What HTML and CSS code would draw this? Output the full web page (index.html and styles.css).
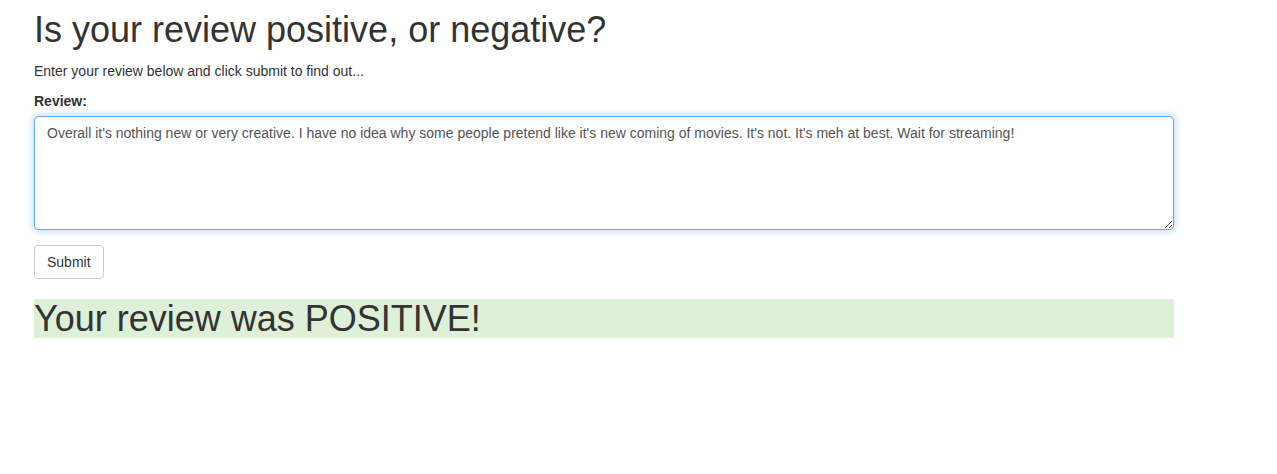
FILE: index.html
```html
<!DOCTYPE html>
<html lang="en">
<head>
<meta charset="utf-8">
<title>Review sentiment</title>
<link rel="stylesheet" href="styles.css">
</head>
<body>
<div class="container">
  <h1 class="title">Is your review positive, or negative?</h1>
  <p class="lead-text">Enter your review below and click submit to find out...</p>
  <form class="review-form">
    <div class="form-group">
      <label class="form-label" for="review">Review:</label>
      <textarea id="review" class="form-control" rows="5">Overall it's nothing new or very creative. I have no idea why some people pretend like it's new coming of movies. It's not. It's meh at best. Wait for streaming!</textarea>
    </div>
    <button type="button" class="btn">Submit</button>
  </form>
  <h1 class="result">Your review was POSITIVE!</h1>
</div>
</body>
</html>
```

FILE: styles.css
```css
html, body {
  margin: 0;
  padding: 0;
  background: #fff;
}
body {
  font-family: "Liberation Sans", Arial, Helvetica, sans-serif;
  font-size: 14px;
  line-height: 1.42857143;
  color: #333;
}
.container {
  width: 1140px;
  margin-left: 34px;
  padding-top: 10px;
}
h1 {
  font-size: 36px;
  font-weight: 400;
  line-height: 1.1;
  margin: 0 0 11px;
}
.lead-text {
  margin: 0 0 10px;
}
.form-group {
  margin-bottom: 15px;
}
.form-label {
  display: inline-block;
  font-weight: 700;
  margin-bottom: 5px;
}
.form-control {
  display: block;
  box-sizing: border-box;
  width: 100%;
  height: 114px;
  padding: 6px 12px;
  font-family: inherit;
  font-size: 14px;
  line-height: 1.42857143;
  color: #555;
  background: #fff;
  border: 1px solid #66afe9;
  border-radius: 4px;
  outline: 0;
  box-shadow: inset 0 1px 1px rgba(0, 0, 0, .075), 0 0 8px rgba(102, 175, 233, .6);
  resize: vertical;
}
.btn {
  display: inline-block;
  box-sizing: border-box;
  height: 34px;
  padding: 6px 12px;
  font-family: inherit;
  font-size: 14px;
  line-height: 1.42857143;
  color: #333;
  background: #fff;
  border: 1px solid #ccc;
  border-radius: 4px;
  cursor: pointer;
}
.review-form {
  margin: 0;
}
.result {
  margin-top: 20px;
  background: #dff0d8;
}
```
